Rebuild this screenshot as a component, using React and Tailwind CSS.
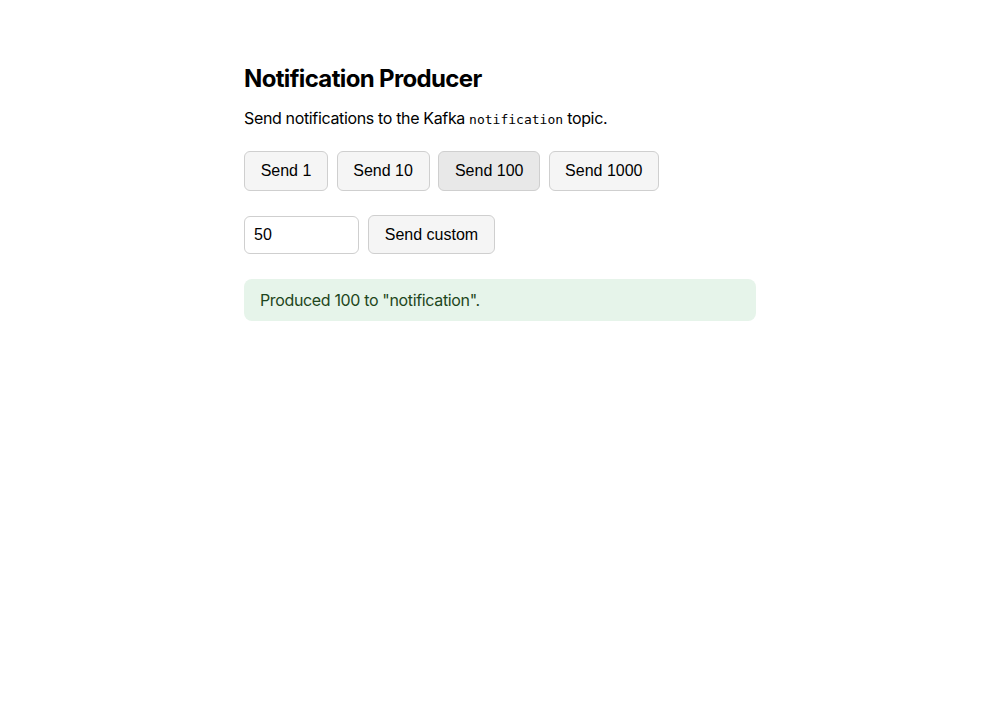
import React from "react";

export default function App() {
  const btn =
    "h-[40px] px-0 whitespace-nowrap rounded-md border border-[#cfcfcf] bg-[#f5f5f5] text-[16px] text-black [font-family:'Liberation_Sans',Arial,sans-serif]";
  return (
    <div className="min-h-[720px] bg-white [font-family:Inter,sans-serif] text-black">
      <div className="w-[512px] mx-auto pt-[64px]">
        <h1 className="text-[24px] font-bold leading-[30px] tracking-[-0.65px]">Notification Producer</h1>
        <p className="mt-[12px] text-[16px] leading-[24px] tracking-[-0.35px]">
          Send notifications to the Kafka{" "}
          <code className="text-[13px] tracking-normal [font-family:'DejaVu_Sans_Mono',monospace]">notification</code> topic.
        </p>
        <div className="mt-[19px] flex gap-[8.6px]">
          <button className={btn + " w-[84px]"}>Send 1</button>
          <button className={btn + " w-[93px]"}>Send 10</button>
          <button className={btn.replace("bg-[#f5f5f5]", "bg-[#e8e8e8]") + " w-[102px]"}>Send 100</button>
          <button className={btn + " w-[110px]"}>Send 1000</button>
        </div>
        <div className="mt-[24px] flex gap-[9px] items-center">
          <input
            defaultValue="50"
            className="w-[115px] h-[38px] px-[9px] rounded-md border border-[#cfcfcf] text-[16px] [font-family:'Liberation_Sans',Arial,sans-serif] outline-none"
          />
          <button className={btn.replace("h-[40px]", "h-[39px]") + " w-[127px]"}>Send custom</button>
        </div>
        <div className="mt-[25px] h-[42px] flex items-center px-4 rounded-lg bg-[#e6f4ea] text-[#1e4620] text-[16px] tracking-[-0.35px]">
          Produced 100 to "notification".
        </div>
      </div>
    </div>
  );
}
